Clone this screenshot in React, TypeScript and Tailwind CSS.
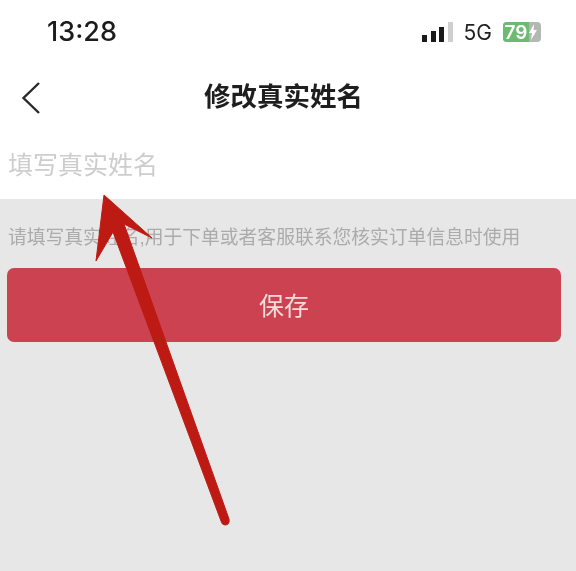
const cjk = "font-['Liberation_Sans','Noto_Sans_CJK_SC',sans-serif]";

function StatusBar() {
  return (
    <div className="flex h-[62px] items-center justify-between pl-[47px] pr-[35px]">
      <span className="text-[27px] font-medium leading-none text-[#1c1c1c] font-['Inter',sans-serif]">13:28</span>
      <div className="flex items-center pt-[2px]">
        <div className="flex items-end gap-[3.5px] h-[20px]">
          <span className="w-[5px] h-[7px] bg-[#1a1a1a]" />
          <span className="w-[5px] h-[11px] bg-[#1a1a1a]" />
          <span className="w-[5px] h-[15px] bg-[#1a1a1a]" />
          <span className="w-[5px] h-[20px] bg-[#cfcfcf]" />
        </div>
        <span className="ml-[11px] text-[21px] leading-none text-[#222] font-['Inter',sans-serif]">5G</span>
        <div className="relative ml-[11px] flex h-[20px] w-[38px] items-center overflow-hidden rounded-[4px] bg-[#b4b8b2]">
          <div className="flex h-full w-[26px] items-center justify-center bg-[#6dbb72]">
            <span className="text-[19px] font-semibold leading-none text-white font-['Inter',sans-serif]">79</span>
          </div>
          <svg viewBox="0 0 8 16" className="h-[16px] w-[8px] fill-white">
            <path d="M5 0 0 9h3l-1 7 6-10H4.6z" />
          </svg>
        </div>
      </div>
    </div>
  );
}

export default function App() {
  return (
    <div className={`relative flex h-[571px] w-[576px] flex-col overflow-hidden bg-[#e7e7e7] blur-[0.5px] ${cjk}`}>
      <div className="h-[199px] bg-white">
        <StatusBar />
        <div className="relative flex h-[70px] items-center justify-center pr-[9px]">
          <svg viewBox="0 0 20 34" className="absolute left-[21px] top-[19px] h-[34px] w-[20px] fill-none stroke-[#2a2a2a] stroke-[2.4]">
            <path d="M18 2 2.5 17 18 32" />
          </svg>
          <h1 className="text-[26.5px] font-bold leading-none text-[#1e1e1e] pt-[1px]">修改真实姓名</h1>
        </div>
        <div className="pl-[8px] pt-[17px] text-[25px] leading-[32px] text-[#cdcdcd]">填写真实姓名</div>
      </div>
      <p className="pl-[8px] pt-[28px] text-[18.8px] leading-[22px] text-[#ababab] whitespace-nowrap">
        请填写真实姓名,用于下单或者客服联系您核实订单信息时使用
      </p>
      <button className="mx-[7px] mt-[19px] flex h-[74px] w-[554px] items-center justify-center rounded-[7px] bg-[#cc4250] pt-[3px] text-[25px] text-[#f4dcdc]">
        保存
      </button>
      <svg viewBox="0 0 576 571" className="pointer-events-none absolute inset-0 h-full w-full">
        <path
          d="M104 195 152 238 124 224 229 519Q230 525 225 525 222 525 221 521L113 232 96 261z"
          fill="#be1a14"
          stroke="#be1a14"
          strokeWidth="1"
          strokeLinejoin="round"
        />
      </svg>
    </div>
  );
}
